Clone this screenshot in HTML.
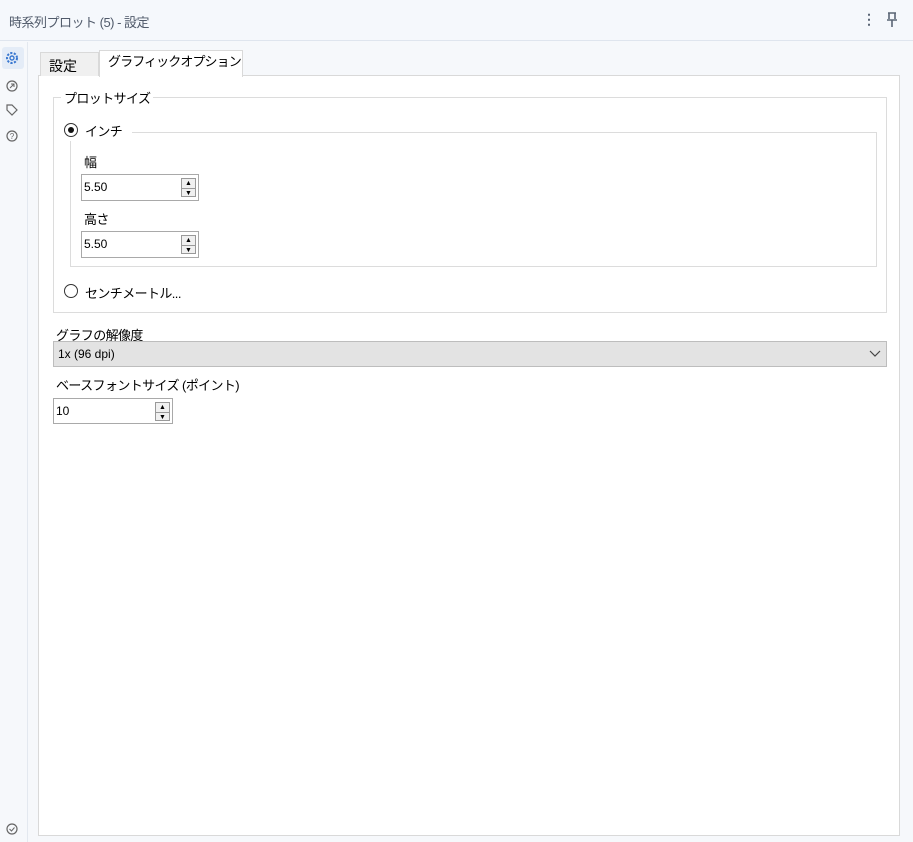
<!DOCTYPE html>
<html><head><meta charset="utf-8"><style>
*{box-sizing:border-box;margin:0;padding:0}
body{width:913px;height:842px;background:#f6f8fb;font-family:"Liberation Sans","Noto Sans CJK JP",sans-serif;position:relative;overflow:hidden;color:#000;white-space:nowrap}
.a{position:absolute}
.hdr{left:0;top:0;width:913px;height:41px;border-bottom:1px solid #dfe5ee;background:#f5f8fc}
.side{left:0;top:42px;width:28px;height:800px;border-right:1px solid #e3e8ef}
.panel{left:38px;top:75px;width:862px;height:761px;background:#fff;border:1px solid #d9d9d9}
.tab{font-size:14px;line-height:24px}
.grp{border:1px solid #dcdcdc}
.lbl{font-size:13px;background:#fff;padding:0 3px;letter-spacing:-0.6px}
.t{font-size:13px;letter-spacing:-0.6px}
.inp{border:1px solid #a9a9a9;background:#fff;font-size:12px;padding-left:2px;line-height:24px}
.spin{position:absolute;right:2px;top:3px;width:15px;height:19px;border:1px solid #999;background:#f0f0f0}
.spin div{height:9px;font-size:7px;text-align:center;line-height:9px;color:#000}
.spin div+div{border-top:1px solid #999}
.rad{width:14px;height:14px;border:1px solid #333;border-radius:50%;background:#fff}
</style></head><body>
<div class="a hdr"></div>
<div class="a" style="left:9px;top:12px;font-size:13px;color:#505a6a;letter-spacing:-0.5px">時系列プロット (5) - 設定</div>
<div class="a" style="left:862px;top:11px;font-size:14px;color:#5a6575;font-weight:bold">⋮</div>
<svg class="a" style="left:886px;top:12px" width="12" height="16" viewBox="0 0 12 16"><path d="M2 1h8M3 1v6M9 1v6M1 8h10M6 8v7" stroke="#5a6575" stroke-width="1.6" fill="none"/></svg>
<div class="a side"></div>
<div class="a" style="left:2px;top:47px;width:22px;height:22px;background:#e4ecf7;border-radius:3px"></div>
<svg class="a" style="left:5px;top:51px" width="14" height="14" viewBox="0 0 14 14"><circle cx="7" cy="7" r="5" fill="none" stroke="#3a78d0" stroke-width="2" stroke-dasharray="2.2 1.4"/><circle cx="7" cy="7" r="2" fill="none" stroke="#3a78d0" stroke-width="1.4"/></svg>
<svg class="a" style="left:6px;top:80px" width="12" height="12"><circle cx="6" cy="6" r="5" fill="none" stroke="#666" stroke-width="1.2"/><path d="M4 8l4-4M5 4h3v3" stroke="#666" fill="none"/></svg>
<svg class="a" style="left:6px;top:104px" width="12" height="12"><path d="M1 1h5l5 5-5 5-5-5z" fill="none" stroke="#666" stroke-width="1.2"/></svg>
<svg class="a" style="left:6px;top:130px" width="12" height="12"><circle cx="6" cy="6" r="5" fill="none" stroke="#666" stroke-width="1.2"/><text x="6" y="9" font-size="8" text-anchor="middle" fill="#666" font-family="Liberation Sans">?</text></svg>
<svg class="a" style="left:6px;top:823px" width="12" height="12"><circle cx="6" cy="6" r="5" fill="none" stroke="#666" stroke-width="1.2"/><path d="M3.5 6l2 2 3-3.5" stroke="#666" fill="none"/></svg>
<div class="a panel"></div>
<div class="a tab" style="left:40px;top:52px;width:59px;height:24px;background:#f0f0f0;border:1px solid #d9d9d9;border-bottom:none;padding-left:8px;padding-top:1px">設定</div>
<div class="a tab" style="left:99px;top:50px;width:144px;height:27px;background:#fff;border:1px solid #d9d9d9;border-bottom:none;padding-left:8px;font-size:13px;line-height:22px;letter-spacing:-0.9px">グラフィックオプション</div>
<div class="a grp" style="left:53px;top:97px;width:834px;height:216px"></div>
<div class="a lbl" style="left:61px;top:88px">プロットサイズ</div>
<div class="a grp" style="left:70px;top:132px;width:807px;height:135px"></div>
<div class="a" style="left:60px;top:121px;background:#fff;width:72px;height:20px"></div>
<div class="a rad" style="left:64px;top:123px"><div style="margin:3px;width:6px;height:6px;border-radius:50%;background:#111"></div></div>
<div class="a t" style="left:85px;top:121px">インチ</div>
<div class="a t" style="left:84px;top:152px">幅</div>
<div class="a inp" style="left:81px;top:174px;width:118px;height:27px">5.50<div class="spin"><div>▲</div><div>▼</div></div></div>
<div class="a t" style="left:84px;top:209px">高さ</div>
<div class="a inp" style="left:81px;top:231px;width:118px;height:27px">5.50<div class="spin"><div>▲</div><div>▼</div></div></div>
<div class="a rad" style="left:64px;top:284px"></div>
<div class="a t" style="left:85px;top:283px">センチメートル...</div>
<div class="a t" style="left:56px;top:325px">グラフの解像度</div>
<div class="a" style="left:53px;top:341px;width:834px;height:26px;background:#e3e3e3;border:1px solid #bdbdbd;font-size:12px;line-height:24px;padding-left:4px">1x (96 dpi)</div>
<svg class="a" style="left:869px;top:350px" width="12" height="8"><path d="M1 1l5 5 5-5" stroke="#444" fill="none" stroke-width="1.2"/></svg>
<div class="a t" style="left:56px;top:375px">ベースフォントサイズ (ポイント)</div>
<div class="a inp" style="left:53px;top:398px;width:120px;height:26px">10<div class="spin"><div>▲</div><div>▼</div></div></div>
</body></html>
